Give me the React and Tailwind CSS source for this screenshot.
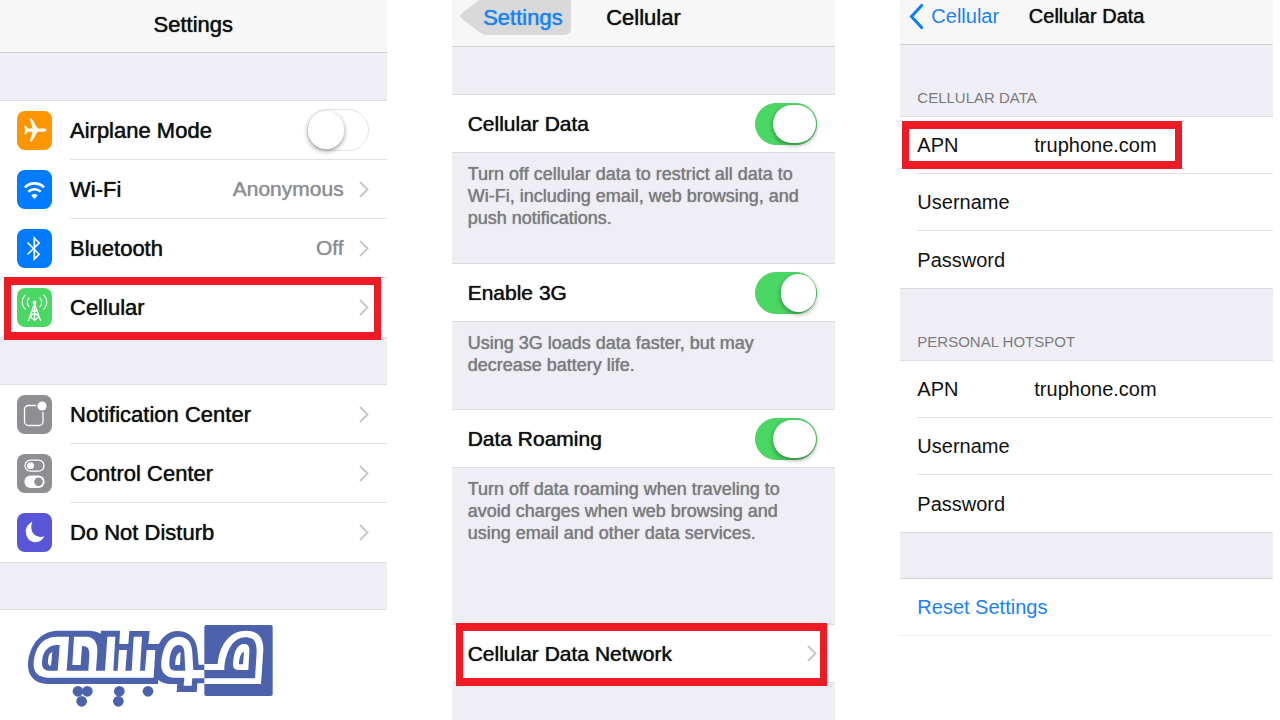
import React from "react";

const tileIcons = {
  airplane: (
    <path
      fill="#fff"
      d="M29.6 19.1c0 1-1.4 1.6-3 1.6h-6l-5.9 9.9h-2.1l3-9.9h-4.8l-2 2.5H7.2l1-4.1-1-4.1h1.6l2 2.5h4.8l-3-9.9h2.1l5.900 9.900h6c1.600 0 3 .6 3 1.600z"
    />
  ),
  wifi: (
    <g fill="none" stroke="#fff" strokeWidth="2.6">
      <path d="M7.9 17.3a13.6 13.6 0 0 1 19.2 0" />
      <path d="M11.4 21.7a8.7 8.7 0 0 1 12.2 0" />
      <path d="M17.5 29l-3.200-3.500a4.400 4.400 0 0 1 6.400 0z" fill="#fff" stroke="none" />
    </g>
  ),
  bluetooth: (
    <path
      fill="none"
      stroke="#fff"
      strokeWidth="1.7"
      strokeLinejoin="miter"
      d="M10.500 13.500l11.600 11.700-4.800 5V9l4.800 5-11.600 11.500"
    />
  ),
  cellular: (
    <g fill="none" stroke="#fff" strokeWidth="1.2" strokeLinecap="round">
      <path d="M8.2 7.2c-4 4-4 10 0 14M12 10c-2.2 2.500-2.200 6.300 0 8.600M26.800 7.200c4 4 4 10 0 14M23 10c2.200 2.500 2.200 6.300 0 8.600" />
      <circle cx="17.500" cy="14.500" r="1.300" fill="#fff" />
      <path d="M17.500 15.500v17M17.300 16l-5.800 16.500M17.700 16l5.800 16.500M15.200 22.500h4.600M15.500 22.500l6.500 6.500M19.500 22.500L13 29M13 29l4.500 3M22 29l-4.500 3" />
    </g>
  ),
  notification: (
    <g>
      <path
        d="M19 10.500h-7.500a4 4 0 0 0-4 4v12a4 4 0 0 0 4 4h10.500a4 4 0 0 0 4-4V17"
        fill="none"
        stroke="#fff"
        strokeWidth="1.300"
      />
      <circle cx="25" cy="11" r="4.600" fill="#fff" />
    </g>
  ),
  control: (
    <g>
      <rect x="8" y="6.200" width="19" height="11" rx="5.500" fill="none" stroke="#fff" strokeWidth="1.300" />
      <circle cx="13.500" cy="11.700" r="3.500" fill="#fff" />
      <rect x="7.400" y="21.500" width="20.200" height="12.500" rx="6.200" fill="#fff" />
      <circle cx="21.500" cy="27.700" r="4.300" fill="#8e8e93" />
    </g>
  ),
  moon: (
    <path
      fill="#fff"
      d="M15.400 8.800c-4 1.900-6.600 5.500-6.600 10 0 5.800 4.200 10.400 9.600 10.400 4.200 0 7.400-2.300 8.800-6.200-1.200.6-2.400.9-3.800.9-5.300 0-9.100-4.200-9.100-9.300 0-2.100.4-4 1.100-5.800z"
    />
  ),
};

function Tile({ name, color }) {
  return (
    <svg
      aria-hidden="true"
      viewBox="0 0 35 39"
      className={`h-[39px] w-[35px] shrink-0 rounded-lg ${color}`}
    >
      {tileIcons[name]}
    </svg>
  );
}

function Chevron() {
  return (
    <svg aria-hidden="true" viewBox="0 0 10 17" className="h-[17px] w-[10px] shrink-0">
      <path d="M1 1l7.500 7.500L1 16" fill="none" stroke="#c7c7cc" strokeWidth="2" />
    </svg>
  );
}

function Switch({ id, on, narrow }) {
  const knob = on
    ? narrow
      ? "before:w-[35px] before:left-[25px]"
      : "before:w-[43px] before:left-[17px]"
    : "before:w-9 before:left-0";
  return (
    <input
      id={id}
      type="checkbox"
      role="switch"
      defaultChecked={on}
      className={`relative h-[42px] w-[62px] shrink-0 appearance-none rounded-full border border-[#e5e5e5] bg-white checked:border-[#4bd763] checked:bg-[#4bd763] before:absolute before:top-px before:h-[38px] before:rounded-full before:bg-white before:shadow-[0_2px_5px_rgba(0,0,0,0.4)] before:content-[''] ${knob}`}
    />
  );
}

function Highlight({ className }) {
  return (
    <span
      aria-hidden="true"
      className={`pointer-events-none absolute z-10 border-x-[7px] border-y-8 border-[#ed1c24] ${className}`}
    />
  );
}

const heavy = "[text-shadow:0_0_1px_currentColor]";

function SettingsRow({ icon, color, label, value, last, highlight }) {
  return (
    <li className="relative flex h-[59px] items-center gap-[18px] pl-[17px]">
      <Tile name={icon} color={color} />
      <a
        href="#"
        className={`flex h-full flex-1 items-center pr-[18px] ${last ? "" : "border-b border-[#e2e2e5]"}`}
      >
        <span className={`flex-1 text-[22px] ${heavy}`}>{label}</span>
        {value && <span className={`mr-[15px] text-[21px] text-[#8e8e93] ${heavy}`}>{value}</span>}
        <Chevron />
      </a>
      {highlight && <Highlight className="-top-px right-[6px] -bottom-[3px] left-1" />}
    </li>
  );
}

function Logo() {
  return (
    <svg role="img" aria-label="موبیچه" viewBox="12 12 735 252" className="h-[84px] w-[245px]">
      <g fill="#4c62ac">
        <path d="M100 32H198Q222 34 230 42L231 32H288L286 72H313L316 33H377L373 72H405C415 50 435 33 460 33C490 33 512 50 518 78C522 100 522 120 524 134H545V190H520L518 216H458L460 192H440C425 192 413 188 403 180L402 192H70C30 190 10 165 12 130C16 80 45 34 100 32Z" />
        <rect x="541" y="15" width="205" height="213" rx="6" />
        <circle cx="162" cy="214" r="16" />
        <circle cx="190" cy="214" r="16" />
        <circle cx="173" cy="244" r="16" />
        <circle cx="286" cy="214" r="16" />
        <circle cx="283" cy="244" r="16" />
        <circle cx="372" cy="214" r="16" />
      </g>
      <g fill="#fff" fillRule="evenodd">
        <path d="M100 50H135L128 152H193L196 105C197 86 190 78 174 78L170 135H145L150 50H190C214 52 222 75 220 98L216 152H243L250 50H274L268 152H281L285 90H309L304 152H323L329 50H354L348 152H363L368 90H394L389 173H72C42 173 28 157 29 130C32 88 52 50 100 50ZM107 75H97C66 77 54 102 54 130C54 145 62 152 75 152H101ZM85 97L81 137C74 137 71 132 72 122C73 108 77 98 85 97Z" />
        <path d="M463 50C493 50 504 70 505 100L508 150H541V175H505L503 197H479L481 173H453C420 173 410 152 412 128C415 84 433 50 463 50ZM462 75C443 77 437 105 436 130C436 146 442 152 454 152H484L481 96C480 80 473 75 462 75ZM470 97L468 135H454C453 117 458 99 470 97Z" />
        <path d="M541 132H581C586 80 613 32 666 32C703 32 719 55 718 90L711 192H541V175H693L698 95C698 62 688 52 663 52C628 52 603 95 601 150H541Z" />
        <path d="M673 150H643C628 150 625 140 628 120C631 90 643 72 660 72C673 72 677 80 676 95ZM660 95C649 98 645 118 645 133H657Z" />
      </g>
    </svg>
  );
}

function SettingsPanel() {
  return (
    <section className="flex min-w-0 flex-col">
      <header className="flex h-[53px] items-center justify-center border-b border-[#cfcfd2] bg-[#f7f7f8] pb-1">
        <h1 className={`text-[22px] font-medium ${heavy}`}>Settings</h1>
      </header>
      <div className="bg-[#efeef4] pt-[47px] pb-[46px]">
        <ul className="border-y border-[#dddde2] bg-white">
          <li className="flex h-[59px] items-center gap-[18px] pl-[17px]">
            <Tile name="airplane" color="bg-[#ff9600]" />
            <div className="flex h-full flex-1 items-center border-b border-[#e2e2e5] pr-[18px]">
              <label htmlFor="airplane" className={`flex-1 text-[22px] ${heavy}`}>
                Airplane Mode
              </label>
              <Switch id="airplane" on={false} />
            </div>
          </li>
          <SettingsRow icon="wifi" color="bg-[#007aff]" label="Wi-Fi" value="Anonymous" />
          <SettingsRow icon="bluetooth" color="bg-[#007aff]" label="Bluetooth" value="Off" />
          <SettingsRow icon="cellular" color="bg-[#4bd763]" label="Cellular" last highlight />
        </ul>
        <ul className="mt-[46px] border-y border-[#dddde2] bg-white">
          <SettingsRow icon="notification" color="bg-[#8e8e93]" label="Notification Center" />
          <SettingsRow icon="control" color="bg-[#8e8e93]" label="Control Center" />
          <SettingsRow icon="moon" color="bg-[#5856d6]" label="Do Not Disturb" last />
        </ul>
      </div>
      <footer className="border-t border-[#dddde2] pt-[14px] pl-7">
        <Logo />
      </footer>
    </section>
  );
}

function ToggleGroup({ id, label, note, narrow, className }) {
  return (
    <div className={className}>
      <div className="flex h-[59px] items-center border-y border-[#dddde2] bg-white pr-[18px] pl-4">
        <label htmlFor={id} className={`flex-1 text-[21px] ${heavy}`}>
          {label}
        </label>
        <Switch id={id} on narrow={narrow} />
      </div>
      <p className={`px-4 pt-[10px] text-[18px] leading-[22px] text-[#7b7b80] ${heavy}`}>
        {note.map((line) => (
          <span key={line} className="block whitespace-nowrap">
            {line}
          </span>
        ))}
      </p>
    </div>
  );
}

function CellularPanel() {
  return (
    <section className="flex min-w-0 flex-col bg-[#efeef4]">
      <header className="grid h-[47px] grid-cols-[1fr_auto_1fr] border-b border-[#cfcfd2] bg-[#f7f7f8]">
        <a href="#" className="relative flex h-[35px] w-[119px] items-center justify-end pr-2 text-[#1a82f0]">
          <svg aria-hidden="true" viewBox="0 0 119 35" className="absolute inset-0 h-full w-full">
            <path d="M27 0H119V28Q119 35 112 35H36Q30 35 26 31L9 18Q7 16 9 14Z" fill="#d9d9da" />
          </svg>
          <span className={`relative text-[22px] ${heavy}`}>Settings</span>
        </a>
        <h2 className={`flex h-[35px] items-center text-[22px] font-medium ${heavy}`}>Cellular</h2>
        <span />
      </header>
      <ToggleGroup
        id="cellular-data"
        label="Cellular Data"
        className="pt-[47px]"
        note={[
          "Turn off cellular data to restrict all data to",
          "Wi-Fi, including email, web browsing, and",
          "push notifications.",
        ]}
      />
      <ToggleGroup
        id="enable-3g"
        label="Enable 3G"
        narrow
        className="pt-[34px]"
        note={["Using 3G loads data faster, but may", "decrease battery life."]}
      />
      <ToggleGroup
        id="data-roaming"
        label="Data Roaming"
        className="pt-[33px]"
        note={[
          "Turn off data roaming when traveling to",
          "avoid charges when web browsing and",
          "using email and other data services.",
        ]}
      />
      <div className="relative mt-20 h-[59px] border-y border-[#dddde2] bg-white">
        <a href="#" className="flex h-full items-center pr-[18px] pl-4">
          <span className={`flex-1 text-[21px] ${heavy}`}>Cellular Data Network</span>
          <Chevron />
        </a>
        <Highlight className="-top-[2px] right-2 -bottom-1 left-1" />
      </div>
    </section>
  );
}

function Field({ id, label, value, type = "text", last, highlight }) {
  return (
    <div className="relative h-[57px] pl-[17px]">
      <div className={`flex h-full items-center ${last ? "" : "border-b border-[#e2e2e5]"}`}>
        <label htmlFor={id} className="w-[117px] shrink-0">
          {label}
        </label>
        <input
          id={id}
          type={type}
          defaultValue={value}
          className="h-full min-w-0 flex-1 bg-transparent text-[20px] outline-none"
        />
      </div>
      {highlight && <Highlight className="top-1 right-[91px] bottom-[5px] left-[2px]" />}
    </div>
  );
}

function FieldGroup({ id, title, highlight }) {
  return (
    <fieldset className="min-w-0">
      <legend className="flex h-[71px] w-full items-end pb-2 pl-[17px] text-[15px] leading-5 text-[#7b7b80]">
        {title}
      </legend>
      <div className="border-y border-[#dddde2] bg-white">
        <Field id={`${id}-apn`} label="APN" value="truphone.com" highlight={highlight} />
        <Field id={`${id}-user`} label="Username" />
        <Field id={`${id}-pass`} label="Password" type="password" last />
      </div>
    </fieldset>
  );
}

function CellularDataPanel() {
  return (
    <section className="flex min-w-0 flex-col text-[20px]">
      <header className="grid h-[45px] grid-cols-[1fr_auto_1fr] items-center border-b border-[#cfcfd2] bg-[#f7f7f8] pb-3">
        <a href="#" className="flex items-center gap-[7px] pl-[9px] text-[#1a82f0]">
          <svg aria-hidden="true" viewBox="0 0 15 27" className="h-[27px] w-[15px]">
            <path d="M13.500 1.500L2.500 13.500l11 12" fill="none" stroke="#0a7cff" strokeWidth="3" />
          </svg>
          Cellular
        </a>
        <h2 className={`font-medium ${heavy}`}>Cellular Data</h2>
        <span />
      </header>
      <div className="bg-[#efeef4] pb-[45px]">
        <FieldGroup id="data" title="CELLULAR DATA" highlight />
        <FieldGroup id="hotspot" title="PERSONAL HOTSPOT" />
      </div>
      <button
        type="button"
        className="h-[58px] border-y border-t-[#d5d5da] border-b-[#ececef] pl-[17px] text-left text-[#1a82f0]"
      >
        Reset Settings
      </button>
    </section>
  );
}

export default function App() {
  return (
    <main className="grid min-h-screen grid-cols-[minmax(0,387fr)_minmax(0,384fr)_minmax(0,373fr)] gap-x-[65px] bg-white pr-[7px] font-['Liberation_Sans',Arial,sans-serif] text-[#111]">
      <SettingsPanel />
      <CellularPanel />
      <CellularDataPanel />
    </main>
  );
}
